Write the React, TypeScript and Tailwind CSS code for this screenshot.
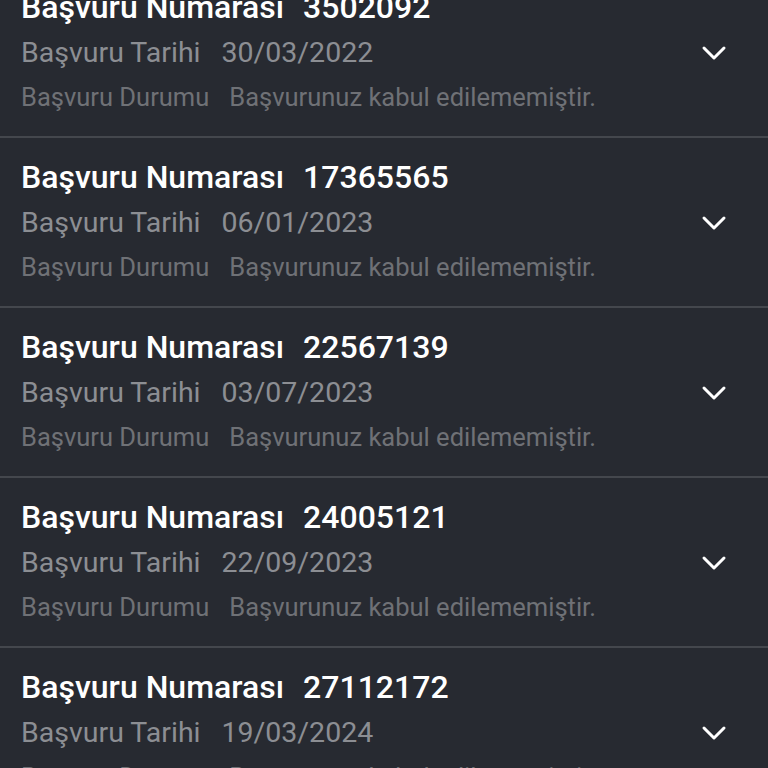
import React from "react";

const ITEMS = [
  { no: "3502092", date: "30/03/2022" },
  { no: "17365565", date: "06/01/2023" },
  { no: "22567139", date: "03/07/2023" },
  { no: "24005121", date: "22/09/2023" },
  { no: "27112172", date: "19/03/2024" },
];

function Chevron() {
  return (
    <svg width="26" height="16" viewBox="0 0 26 16" fill="none" className="shrink-0 mt-[55px]">
      <polyline
        points="3,3 13,13 23,3"
        stroke="#ffffff"
        strokeWidth="3"
        strokeLinecap="round"
        strokeLinejoin="round"
      />
    </svg>
  );
}

export default function App() {
  return (
    <div
      className="w-[768px] h-[768px] overflow-hidden bg-[#272a31]"
      style={{ fontFamily: "Roboto, 'Noto Sans', sans-serif" }}
    >
      <div className="-mt-[32px]">
        {ITEMS.map((it) => (
          <div
            key={it.no}
            className="h-[170px] flex items-start justify-between pt-[22px] pl-[21px] pr-[41px] border-b-2 border-[#44474d]"
          >
            <div className="flex flex-col whitespace-nowrap">
              <p className="text-[32px] leading-[34px] font-medium text-white">
                Başvuru Numarası<span className="ml-[19px]">{it.no}</span>
              </p>
              <p className="mt-[12px] text-[28.5px] leading-[34px] text-[#8c8e93]">
                Başvuru Tarihi<span className="ml-[21px]">{it.date}</span>
              </p>
              <p className="mt-[12px] text-[25.5px] leading-[30px] text-[#6f7176]">
                Başvuru Durumu<span className="ml-[20px]">Başvurunuz kabul edilememiştir.</span>
              </p>
            </div>
            <Chevron />
          </div>
        ))}
      </div>
    </div>
  );
}
